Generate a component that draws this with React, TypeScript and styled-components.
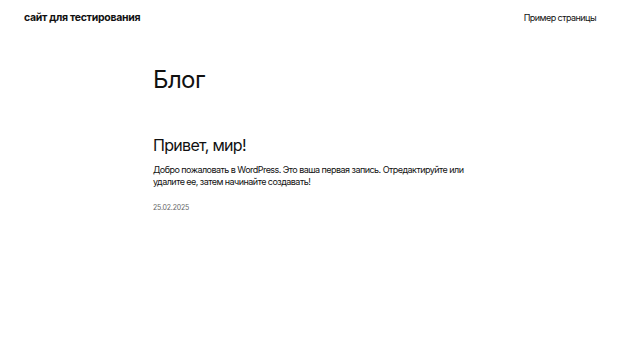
import styled, { createGlobalStyle } from "styled-components";

const GlobalStyle = createGlobalStyle`
    body {
        margin: 0;
        background: #fff;
        color: #111;
        font-family: Inter, "Liberation Sans", sans-serif;
    }
`;

const Header = styled.header`
    display: flex;
    justify-content: space-between;
    align-items: center;
    padding: 5px 24px 0 24px;
    height: 24px;
`;

const SiteTitle = styled.div`
    font-size: 10.5px;
    font-weight: 700;
    letter-spacing: -0.3px;
`;

const Nav = styled.nav`
    font-size: 9px;
    letter-spacing: -0.55px;
`;

const Main = styled.main`
    width: 314px;
    margin: 0 auto;
    padding-top: 37px;
`;

const PageTitle = styled.h1`
    margin: 0;
    font-size: 24px;
    font-weight: 400;
    letter-spacing: -0.6px;
    line-height: 1.2;
`;

const Post = styled.article`
    margin-top: 41px;
`;

const PostTitle = styled.h2`
    margin: 0;
    font-size: 16px;
    font-weight: 400;
    letter-spacing: -0.7px;
    line-height: 1.2;
`;

const Excerpt = styled.p`
    margin: 9px 0 0 0;
    font-size: 9px;
    line-height: 12px;
    letter-spacing: -0.54px;
`;

const PostDate = styled.div`
    margin-top: 15px;
    font-size: 7px;
    color: #666;
    letter-spacing: -0.2px;
`;

const App = () => {
    return (
        <>
            <GlobalStyle />
            <Header>
                <SiteTitle>сайт для тестирования</SiteTitle>
                <Nav>Пример страницы</Nav>
            </Header>
            <Main>
                <PageTitle>Блог</PageTitle>
                <Post>
                    <PostTitle>Привет, мир!</PostTitle>
                    <Excerpt>
                        Добро пожаловать в WordPress. Это ваша первая запись. Отредактируйте или
                        удалите ее, затем начинайте создавать!
                    </Excerpt>
                    <PostDate>25.02.2025</PostDate>
                </Post>
            </Main>
        </>
    );
};

export default App;
